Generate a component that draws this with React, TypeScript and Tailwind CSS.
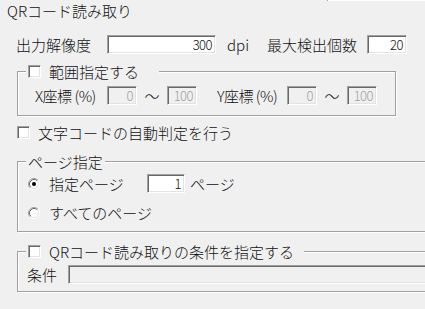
const sunken =
  "border border-t-[#a0a0a0] border-l-[#a0a0a0] border-r-white border-b-white shadow-[inset_1px_1px_0_#696969,inset_-1px_-1px_0_#e3e3e3]";
const group = "border border-[#a0a0a0] shadow-[inset_1px_1px_0_#fff,1px_1px_0_#fff] pl-[8px]";

function Check() {
  return <span className={`block w-[13px] h-[13px] bg-white shrink-0 ${sunken}`} />;
}

function Radio({ on }: { on?: boolean }) {
  return (
    <svg width="12" height="12" viewBox="0 0 12 12" className="shrink-0">
      <circle cx="6" cy="6" r="4.5" fill="#fff" />
      <path d="M2.11 9.89 A5.5 5.5 0 0 1 9.89 2.11" stroke="#a0a0a0" fill="none" />
      <path d="M9.89 2.11 A5.5 5.5 0 0 1 2.11 9.89" stroke="#fff" fill="none" />
      <path d="M2.82 9.18 A4.5 4.5 0 0 1 9.18 2.82" stroke="#696969" fill="none" />
      <path d="M9.18 2.82 A4.5 4.5 0 0 1 2.82 9.18" stroke="#e3e3e3" fill="none" />
      {on && <circle cx="6" cy="6" r="2" fill="#000" />}
    </svg>
  );
}

function Field({ value, width, disabled }: { value: string; width: string; disabled?: boolean }) {
  return (
    <div
      className={`${width} h-[19px] flex items-center justify-end pr-[3px] text-[13px] tracking-[-0.5px] ${
        disabled ? "bg-[#f0f0f0] text-[#a0a0a0]" : "bg-white"
      } ${sunken}`}
    >
      {value}
    </div>
  );
}

export default function App() {
  return (
    <div className="w-[425px] h-[309px] overflow-hidden bg-[#f0f0f0] text-[#111] text-[15px] leading-[17px] font-light font-['Noto_Sans_CJK_JP','Noto_Sans',sans-serif]">
      <div className="ml-[327px] h-px bg-white border-l border-[#a0a0a0]" />
      <div className="pl-[7px] mt-px h-[17px]">QRコード読み取り</div>

      <div className="flex items-center mt-[16px] h-[19px]">
        <span className="ml-[16px] w-[91px]">出力解像度</span>
        <Field value="300" width="w-[109px]" />
        <span className="ml-[11px] w-[40px]">dpi</span>
        <span className="w-[100px]">最大検出個数</span>
        <Field value="20" width="w-[40px]" />
      </div>

      <fieldset className={`ml-[17px] mt-[9px] w-[379px] pb-[10px] ${group}`}>
        <legend className="flex items-center h-[17px] bg-[#f0f0f0] pl-[2px] pr-[20px]">
          <Check />
          <span className="ml-[8px]">範囲指定する</span>
        </legend>
        <div className="flex items-center h-[19px] mt-[6px] ml-[9px]">
          <span className="w-[72px] tracking-[-0.5px]">X座標 (%)</span>
          <Field value="0" width="w-[30px]" disabled />
          <span className="w-[30px] text-center">〜</span>
          <Field value="100" width="w-[30px]" disabled />
          <span className="ml-[20px] w-[70px] tracking-[-0.5px]">Y座標 (%)</span>
          <Field value="0" width="w-[30px]" disabled />
          <span className="w-[30px] text-center">〜</span>
          <Field value="100" width="w-[30px]" disabled />
        </div>
      </fieldset>

      <div className="flex items-center mt-[8px] h-[17px] ml-[17px]">
        <Check />
        <span className="ml-[8px]">文字コードの自動判定を行う</span>
      </div>

      <fieldset className={`ml-[17px] mt-[12px] w-[420px] pb-[10px] ${group}`}>
        <legend className="h-[17px] bg-[#f0f0f0] px-[2px]">ページ指定</legend>
        <div className="flex items-center h-[19px] mt-[4px] ml-[2px]">
          <Radio on />
          <span className="ml-[9px] w-[98px]">指定ページ</span>
          <Field value="1" width="w-[38px]" />
          <span className="ml-[5px]">ページ</span>
        </div>
        <div className="flex items-center h-[17px] mt-[11px] ml-[2px]">
          <Radio />
          <span className="ml-[9px]">すべてのページ</span>
        </div>
      </fieldset>

      <fieldset className={`ml-[17px] mt-[11px] w-[420px] pb-[7px] ${group}`}>
        <legend className="flex items-center h-[17px] bg-[#f0f0f0] pl-[2px] pr-[10px]">
          <Check />
          <span className="ml-[8px]">QRコード読み取りの条件を指定する</span>
        </legend>
        <div className="flex items-center h-[19px] mt-[5px] ml-[1px]">
          <span className="w-[41px]">条件</span>
          <div className={`flex-1 h-[19px] bg-[#f0f0f0] ${sunken}`} />
        </div>
      </fieldset>
    </div>
  );
}
